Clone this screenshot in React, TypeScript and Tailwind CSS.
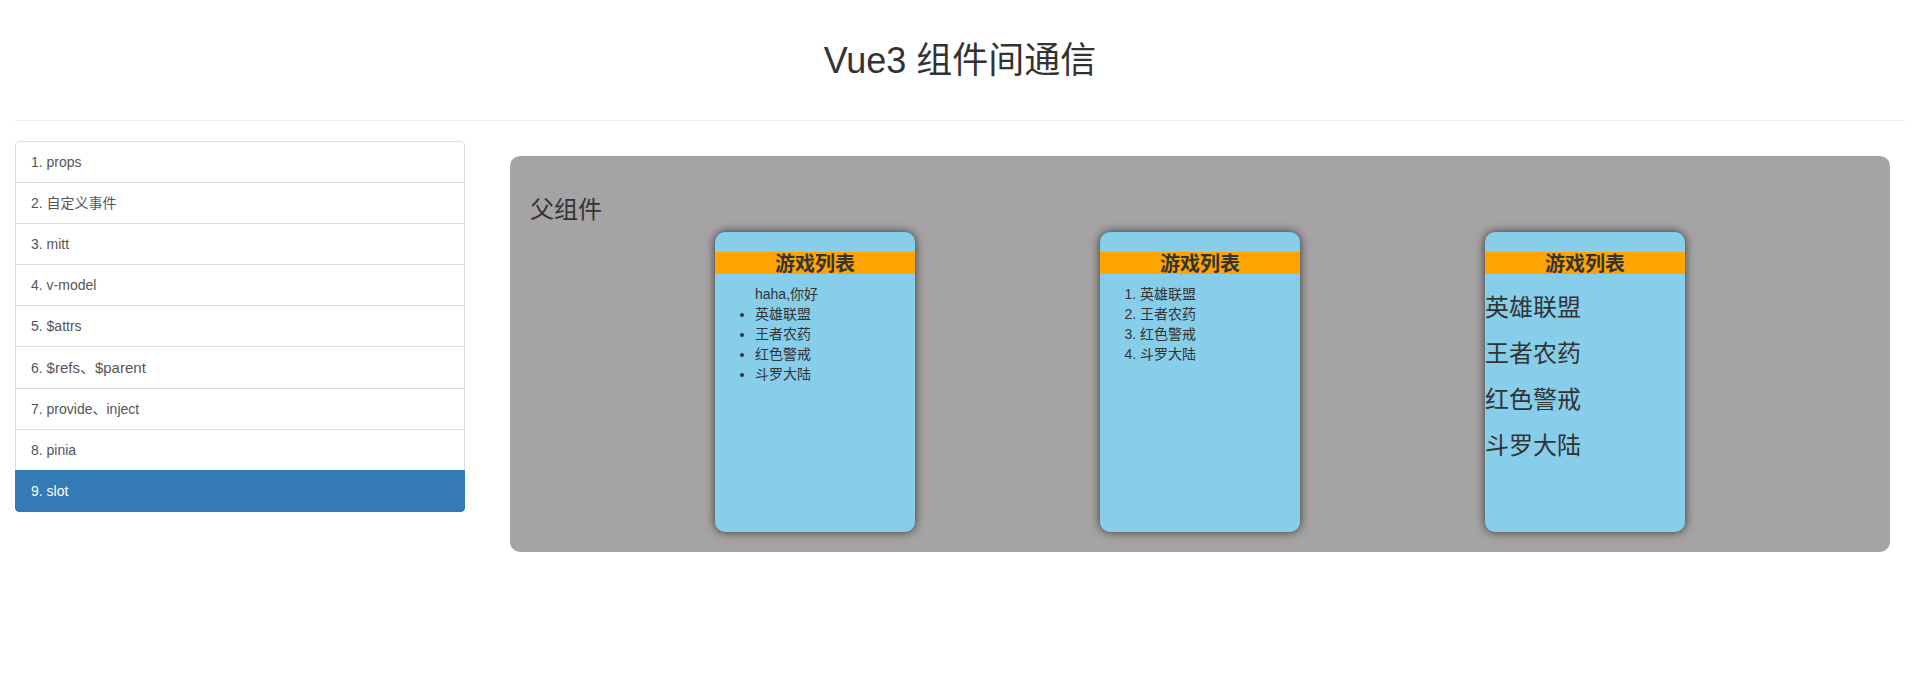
import type { ReactNode } from "react";

const links = [
  "props",
  "自定义事件",
  "mitt",
  "v-model",
  "$attrs",
  "$refs、$parent",
  "provide、inject",
  "pinia",
  "slot",
];

const wideLink = 5;
const activeLink = 8;

const games = ["英雄联盟", "王者农药", "红色警戒", "斗罗大陆"];

function Category({ title, children }: { title: string; children: ReactNode }) {
  return (
    <section className="h-[300px] w-[200px] rounded-[10px] bg-[#87ceeb] pt-5 shadow-[0_0_10px_#333]">
      <h2 className="mb-2.5 bg-[#ffa500] pt-0.5 text-center text-[20px] leading-5 font-bold">{title}</h2>
      {children}
    </section>
  );
}

export default function App() {
  return (
    <div className="font-['Liberation_Sans','Noto_Sans_CJK_SC',sans-serif] text-[14px] leading-5 text-[#333]">
      <header className="mx-[15px] mb-5 border-b border-[#eee] py-10">
        <h1 className="pt-0.5 text-center text-[36px] leading-[38px]">Vue3 组件间通信</h1>
      </header>
      <div className="flex">
        <div className="w-1/4 px-[15px]">
          <nav>
            {links.map((label, index) => (
              <a
                key={label}
                href="#"
                aria-current={index === activeLink ? "page" : undefined}
                className={`relative -mb-px block border px-[15px] py-2.5 first:rounded-t-[4px] last:mb-0 last:rounded-b-[4px] ${
                  index === activeLink
                    ? "z-10 border-[#337ab7] bg-[#337ab7] text-white"
                    : "border-[#ddd] bg-white text-[#555]"
                }`}
              >
                {index + 1}. <span className={index === wideLink ? "text-[15px] leading-[21px]" : ""}>{label}</span>
              </a>
            ))}
          </nav>
        </div>
        <main className="w-3/4 p-[15px]">
          <div className="mx-[15px] rounded-[10px] bg-[#a5a3a3] p-5">
            <h3 className="mt-5 mb-2.5 pt-0.5 text-[24px] leading-6">父组件</h3>
            <div className="flex justify-evenly">
              <Category title="游戏列表">
                <ul className="list-disc pl-10">
                  <li className="list-none">haha,你好</li>
                  {games.map((game) => (
                    <li key={game}>{game}</li>
                  ))}
                </ul>
              </Category>
              <Category title="游戏列表">
                <ol className="list-decimal pl-10">
                  {games.map((game) => (
                    <li key={game}>{game}</li>
                  ))}
                </ol>
              </Category>
              <Category title="游戏列表">
                <div className="flex flex-col gap-5 pt-2.5">
                  {games.map((game) => (
                    <h3 key={game} className="pt-0.5 text-[24px] leading-6">
                      {game}
                    </h3>
                  ))}
                </div>
              </Category>
            </div>
          </div>
        </main>
      </div>
    </div>
  );
}
